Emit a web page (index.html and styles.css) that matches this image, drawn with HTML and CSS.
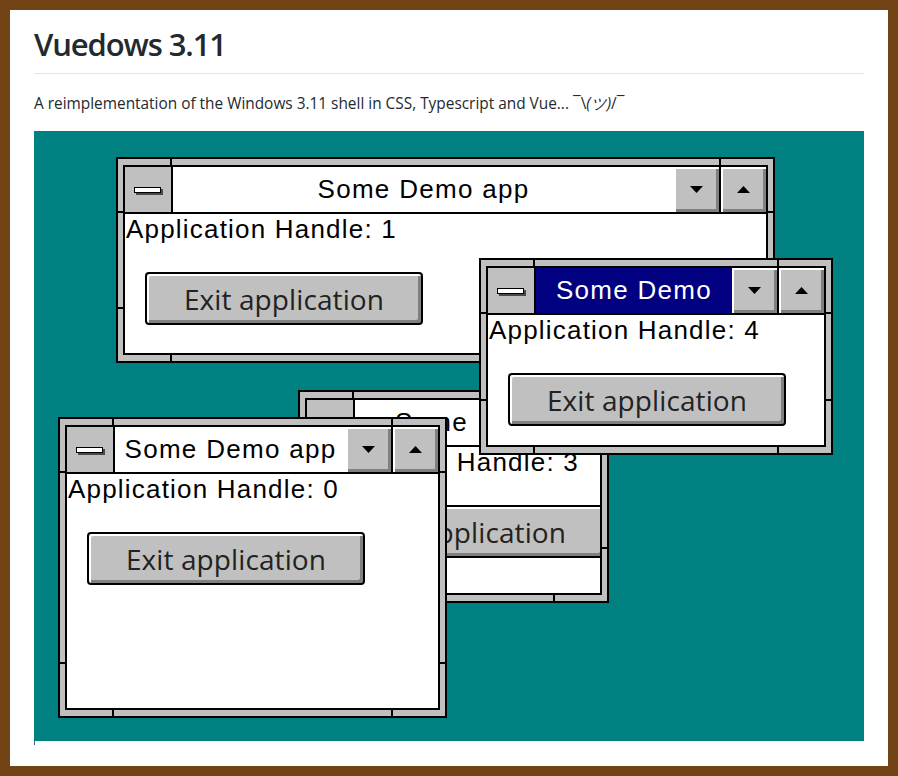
FILE: index.html
```html
<!DOCTYPE html>
<html lang="en">
<head>
<meta charset="utf-8">
<title>Vuedows 3.11</title>
<link rel="stylesheet" href="styles.css">
</head>
<body>
<div class="page">
  <h1 class="heading">Vuedows 3.11</h1>
  <p class="lead">A reimplementation of the Windows 3.11 shell in CSS, Typescript and Vue... ¯\<em>(ツ)</em>/¯</p>
  <div class="desktop">

    <div class="win win-1">
      <div class="win-inner">
        <div class="titlebar">
          <div class="sysmenu"><span class="sysbar"></span></div>
          <div class="wtitle">Some Demo app</div>
          <div class="tbtn"><svg width="13" height="7" viewBox="0 0 13 7"><polygon points="0,0 13,0 6.5,7"/></svg></div>
          <div class="tbtn tbtn-up"><svg width="13" height="7" viewBox="0 0 13 7"><polygon points="0,7 13,7 6.5,0"/></svg></div>
        </div>
        <div class="content">
          <div class="handle">Application Handle: 1</div>
          <button class="exit">Exit application</button>
        </div>
      </div>
    </div>

    <div class="win win-3">
      <div class="win-inner">
        <div class="titlebar">
          <div class="sysmenu"><span class="sysbar"></span></div>
          <div class="wtitle">Some Demo app</div>
          <div class="tbtn"><svg width="13" height="7" viewBox="0 0 13 7"><polygon points="0,0 13,0 6.5,7"/></svg></div>
          <div class="tbtn tbtn-up"><svg width="13" height="7" viewBox="0 0 13 7"><polygon points="0,7 13,7 6.5,0"/></svg></div>
        </div>
        <div class="content">
          <div class="handle">Application Handle: 3</div>
          <button class="exit">Exit application</button>
        </div>
      </div>
    </div>

    <div class="win win-4 active">
      <div class="win-inner">
        <div class="titlebar">
          <div class="sysmenu"><span class="sysbar"></span></div>
          <div class="wtitle">Some Demo app</div>
          <div class="tbtn"><svg width="13" height="7" viewBox="0 0 13 7"><polygon points="0,0 13,0 6.5,7"/></svg></div>
          <div class="tbtn tbtn-up"><svg width="13" height="7" viewBox="0 0 13 7"><polygon points="0,7 13,7 6.5,0"/></svg></div>
        </div>
        <div class="content">
          <div class="handle">Application Handle: 4</div>
          <button class="exit">Exit application</button>
        </div>
      </div>
    </div>

    <div class="win win-0">
      <div class="win-inner">
        <div class="titlebar">
          <div class="sysmenu"><span class="sysbar"></span></div>
          <div class="wtitle">Some Demo app</div>
          <div class="tbtn"><svg width="13" height="7" viewBox="0 0 13 7"><polygon points="0,0 13,0 6.5,7"/></svg></div>
          <div class="tbtn tbtn-up"><svg width="13" height="7" viewBox="0 0 13 7"><polygon points="0,7 13,7 6.5,0"/></svg></div>
        </div>
        <div class="content">
          <div class="handle">Application Handle: 0</div>
          <button class="exit">Exit application</button>
        </div>
      </div>
    </div>

  </div>
  <div class="desk-edge"></div>
</div>
</body>
</html>
```

FILE: styles.css
```css
html, body {
  margin: 0;
  padding: 0;
  background: #fff;
}

.page {
  box-sizing: border-box;
  width: 898px;
  height: 776px;
  border: 10px solid #704214;
  padding: 14px 24px 0 24px;
  background: #fff;
  font-family: "Open Sans", "Noto Sans", sans-serif;
  color: #24292e;
}

.heading {
  margin: 0;
  font-size: 31px;
  font-weight: 600;
  line-height: 40px;
  letter-spacing: -1.1px;
  padding-bottom: 9px;
  border-bottom: 1px solid #e4e6e9;
  color: #24292e;
}

.lead {
  margin: 19px 0 17px 0;
  font-size: 15.4px;
  line-height: 21px;
  color: #24292e;
}

.lead em {
  font-style: italic;
}

.desktop {
  position: relative;
  width: 830px;
  height: 610px;
  background: #008080;
  overflow: hidden;
}

.desk-edge {
  width: 1px;
  height: 4px;
  background: #3b5ea8;
}

/* ---------- windows ---------- */
.win {
  position: absolute;
  box-sizing: border-box;
  display: flex;
  border: 2px solid #000;
  padding: 6px 5px;
  background-color: #c0c0c0;
  background-image:
    linear-gradient(to right, transparent 52px, #000 52px, #000 54px, transparent 54px),
    linear-gradient(to left, transparent 52px, #000 52px, #000 54px, transparent 54px),
    linear-gradient(to bottom, transparent 52px, #000 52px, #000 54px, transparent 54px),
    linear-gradient(to top, transparent 52px, #000 52px, #000 54px, transparent 54px);
}

.win-1 { left: 82px;  top: 26px;  width: 659px; height: 206px; z-index: 1; }
.win-3 { left: 264px; top: 259px; width: 311px; height: 213px; z-index: 2; }
.win-4 { left: 445px; top: 127px; width: 354px; height: 197px; z-index: 3; }
.win-0 { left: 24px;  top: 286px; width: 389px; height: 301px; z-index: 4; }

.win-inner {
  flex: 1;
  min-width: 0;
  display: flex;
  flex-direction: column;
  border: 2px solid #000;
  background: #fff;
  overflow: hidden;
}

.titlebar {
  flex: none;
  display: flex;
  height: 45px;
  border-bottom: 2px solid #000;
}

.sysmenu {
  flex: none;
  width: 46px;
  background: #c0c0c0;
  border-right: 2px solid #000;
  display: flex;
  align-items: center;
  justify-content: center;
}

.sysbar {
  display: block;
  width: 25px;
  height: 4px;
  border: 1px solid #000;
  background: #fff;
  box-shadow: 2px 2px 0 #4a4a4a;
  margin: 1px 2px 0 0;
}

.wtitle {
  flex: 1;
  min-width: 0;
  height: 45px;
  overflow: hidden;
  text-align: center;
  font-family: "Liberation Sans", Arial, sans-serif;
  font-size: 26px;
  letter-spacing: 1.3px;
  line-height: 45px;
  color: #000;
  background: #fff;
}

.active .wtitle {
  background: #000080;
  color: #fff;
}

.tbtn {
  flex: none;
  width: 45px;
  background: #c0c0c0;
  box-shadow: inset 2px 2px 0 #fff, inset -3px -3px 0 #808080;
  display: flex;
  align-items: center;
  justify-content: center;
}

.tbtn svg {
  display: block;
  fill: #000;
}

.tbtn-up {
  border-left: 2px solid #000;
}

.content {
  flex: 1;
  min-height: 0;
  overflow: hidden;
  padding-left: 1px;
}

.handle {
  font-family: "Liberation Sans", Arial, sans-serif;
  font-size: 26px;
  letter-spacing: 1.2px;
  line-height: 30px;
  color: #000;
  white-space: nowrap;
}

.exit {
  display: block;
  box-sizing: border-box;
  margin: 28px 0 0 19px;
  width: 278px;
  height: 53px;
  padding: 0;
  border: 2px solid #000;
  border-radius: 4px;
  background: #c0c0c0;
  box-shadow: inset 2px 2px 0 #fff, inset -3px -3px 0 #808080;
  font-family: "Open Sans", "Noto Sans", sans-serif;
  font-size: 28px;
  line-height: 1;
  letter-spacing: 0.1px;
  color: #222;
  text-align: center;
  white-space: nowrap;
}
```
